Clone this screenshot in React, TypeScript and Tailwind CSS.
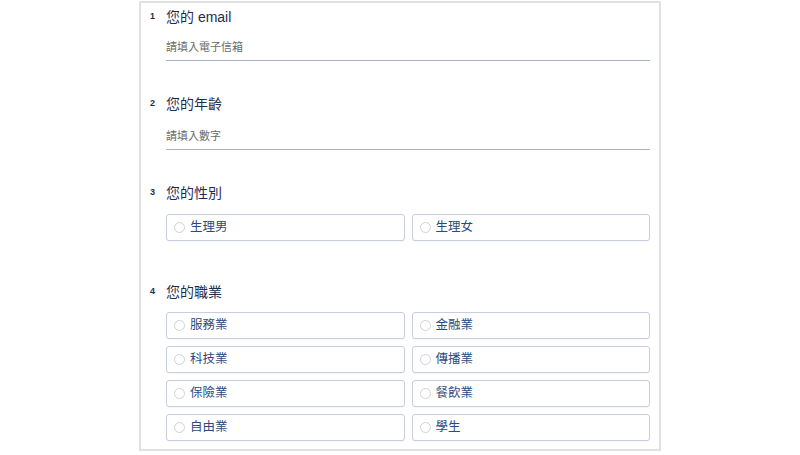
const font = { fontFamily: '"Liberation Sans", "Noto Sans CJK TC", sans-serif' }

type Question =
  | { n: number; title: string; kind: 'text'; placeholder: string; gap: string; inputH: string }
  | { n: number; title: string; kind: 'choice'; options: string[]; gap: string }

const questions: Question[] = [
  { n: 1, title: '您的 email', kind: 'text', placeholder: '請填入電子信箱', gap: 'mt-[4px]', inputH: 'h-[34px]' },
  { n: 2, title: '您的年齡', kind: 'text', placeholder: '請填入數字', gap: 'mt-[33px]', inputH: 'h-[36px]' },
  { n: 3, title: '您的性別', kind: 'choice', options: ['生理男', '生理女'], gap: 'mt-[33px]' },
  {
    n: 4,
    title: '您的職業',
    kind: 'choice',
    options: ['服務業', '金融業', '科技業', '傳播業', '保險業', '餐飲業', '自由業', '學生'],
    gap: 'mt-[41px]',
  },
]

function Option({ label }: { label: string }) {
  return (
    <label className="flex h-[27px] items-center rounded-[3px] border border-[#c9cde0] bg-white pl-[7px] shadow-[0_1px_1px_rgba(0,0,0,0.04)]">
      <span className="h-[11px] w-[11px] rounded-full border border-[#cfd2da] bg-white" />
      <span className="ml-[5px] text-[12.5px] leading-none text-[#2d4a80]">{label}</span>
    </label>
  )
}

export default function App() {
  return (
    <div className="min-h-[455px] bg-white" style={font}>
      <div className="mx-auto mt-[1px] w-[522px] border-2 border-[#e1e1e1] pb-[8px] pl-[9px] pr-[9px]">
        {questions.map(q => (
          <section key={q.n} className={`flex ${q.gap}`}>
            <div className="w-[16px] shrink-0 pt-[2px] text-[9px] font-bold leading-[14px] text-[#1f2d4d]">{q.n}</div>
            <div className="flex-1">
              <h2 className="h-[20px] text-[14px] leading-[20px] text-[#1f2d4d]">{q.title}</h2>
              {q.kind === 'text' ? (
                <div className={`flex ${q.inputH} items-end border-b-[1.5px] border-[#a9b1c9] pb-[6px]`}>
                  <span className="text-[11px] leading-[14px] text-[#6a6a6a]">{q.placeholder}</span>
                </div>
              ) : (
                <div className={`grid grid-cols-2 gap-x-[7px] gap-y-[7px] ${q.n === 3 ? 'mt-[11px]' : 'mt-[10px]'}`}>
                  {q.options.map(o => (
                    <Option key={o} label={o} />
                  ))}
                </div>
              )}
            </div>
          </section>
        ))}
      </div>
    </div>
  )
}
